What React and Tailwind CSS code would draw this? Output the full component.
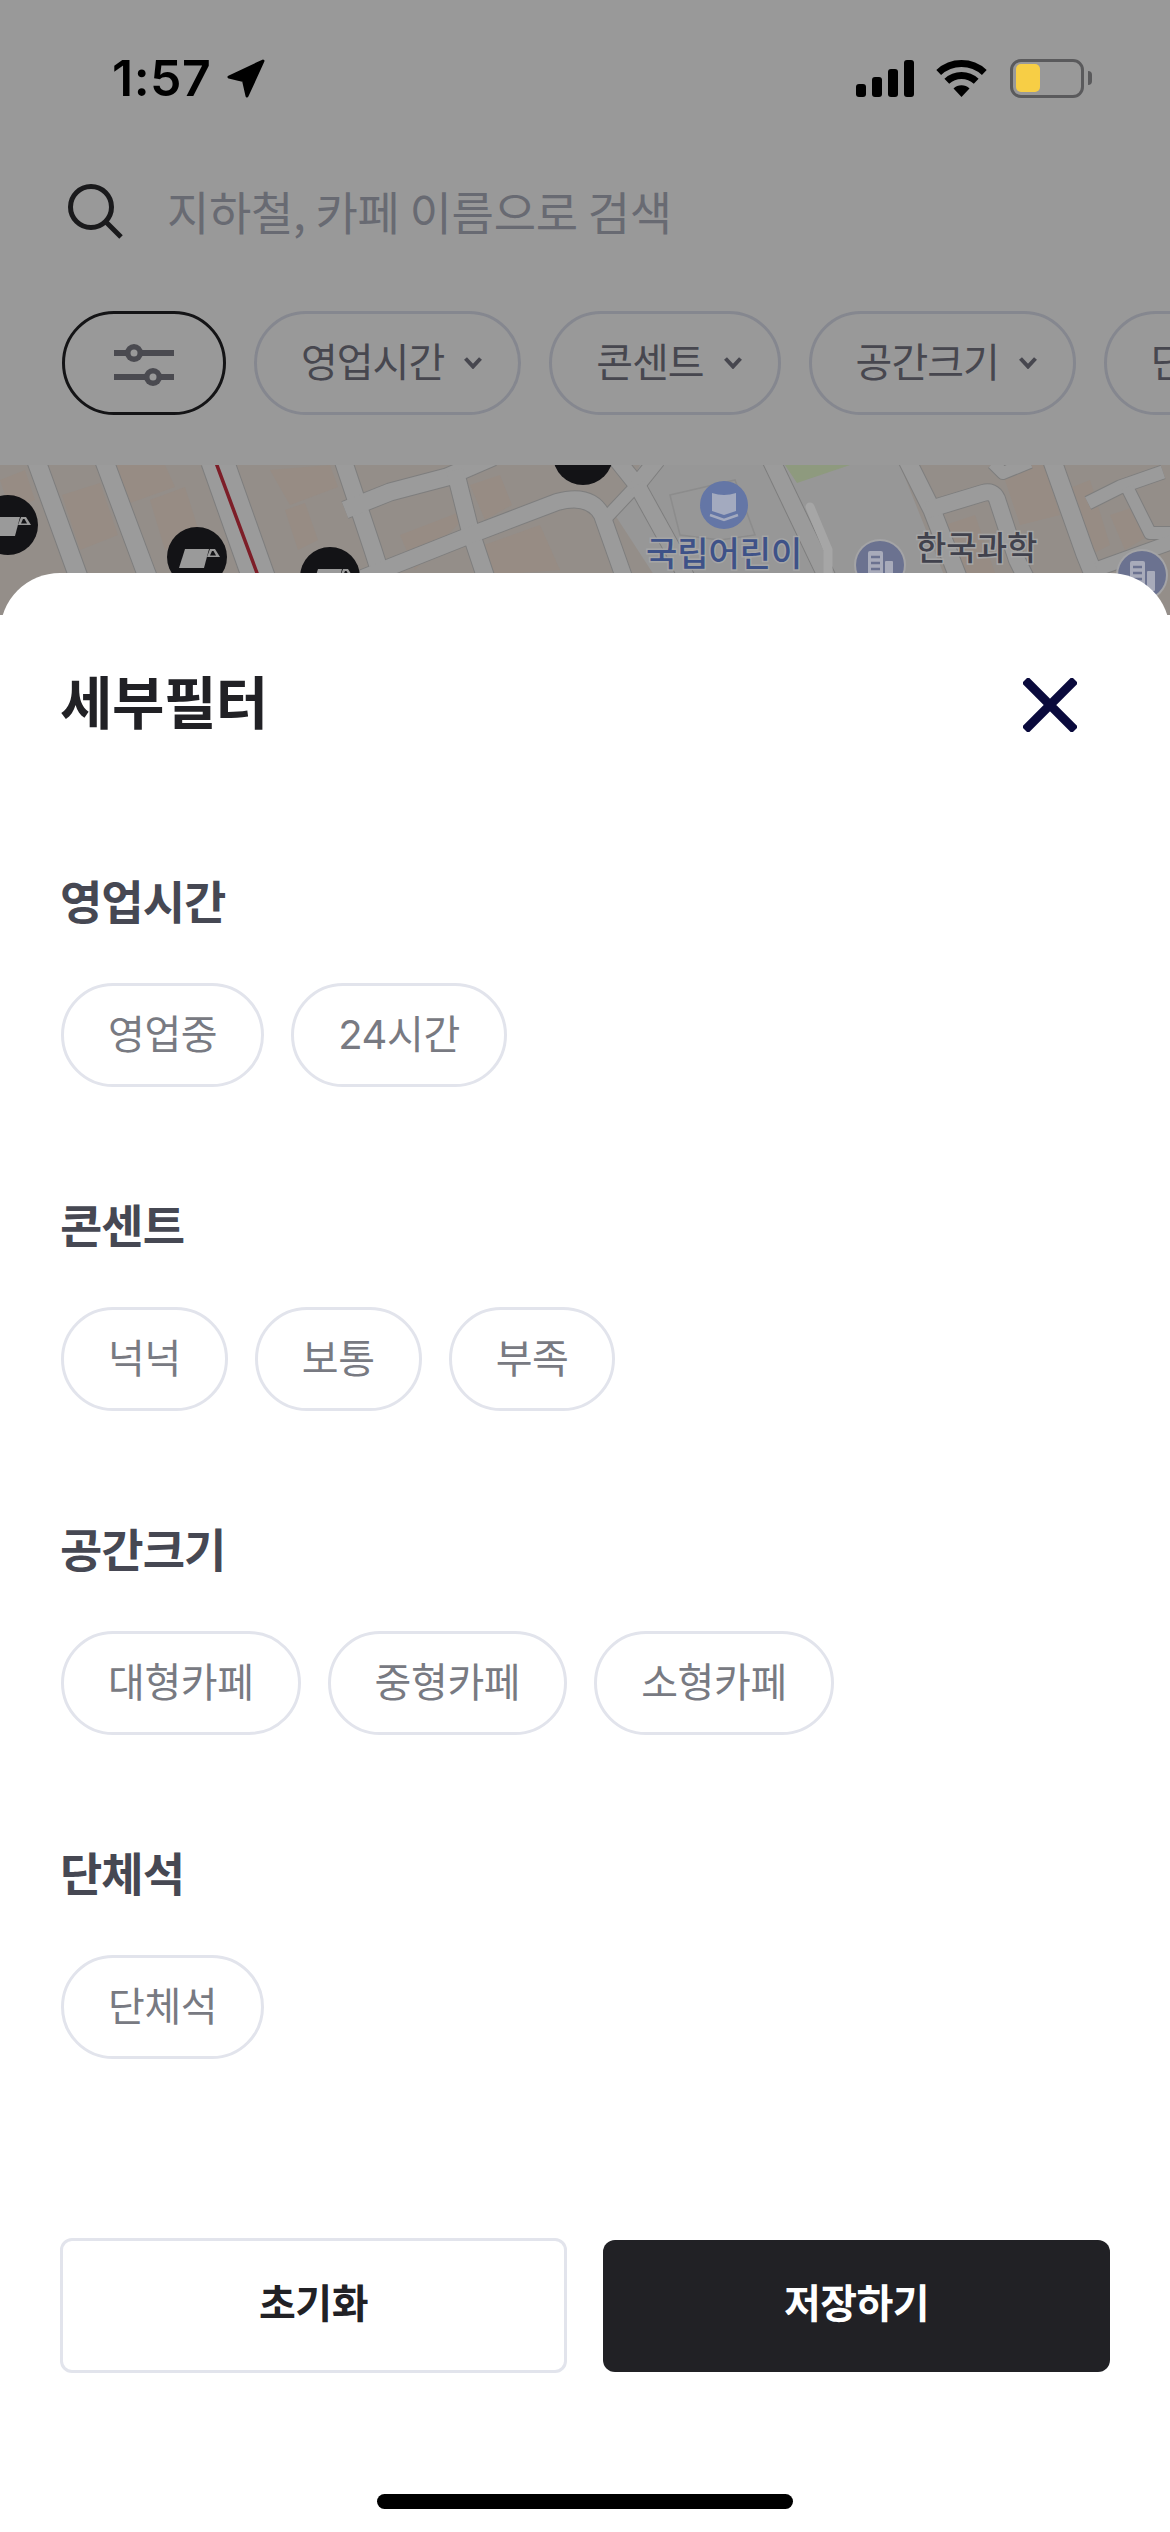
const FONT = "font-['Inter','Noto_Sans_CJK_KR','Noto_Sans',sans-serif]"

const TOP_CHIPS = ['영업시간', '콘센트', '공간크기', '단체석']

const SECTIONS = [
  { title: '영업시간', options: ['영업중', '24시간'] },
  { title: '콘센트', options: ['넉넉', '보통', '부족'] },
  { title: '공간크기', options: ['대형카페', '중형카페', '소형카페'] },
  { title: '단체석', options: ['단체석'] },
]

const ROADS = [
  { d: 'M36 -5L77 108L100 170', w: 18 },
  { d: 'M104 -5L145 105L170 170', w: 18 },
  { d: 'M217 -5L257 108L280 170', w: 32 },
  { d: 'M343 -5L373 85L400 170', w: 17 },
  { d: 'M345 45L390 27L447 12L493 -8', w: 17 },
  { d: 'M455 5L470 65L490 125', w: 17 },
  { d: 'M320 130L390 102L468 71L557 37Q590 28 602 50L625 115', w: 16 },
  { d: 'M617 -5L637 20L657 -5', w: 16 },
  { d: 'M637 20L607 52', w: 12 },
  { d: 'M637 20L673 85L695 130', w: 16 },
  { d: 'M771 -5L825 108L840 140', w: 17 },
  { d: 'M907 -5L932 45L965 130', w: 17 },
  { d: 'M927 45L983 28Q993 25 997 34L1017 95L1027 115', w: 16 },
  { d: 'M1052 -5L1085 88L1100 125', w: 18 },
  { d: 'M1088 38L1120 22L1163 7', w: 13 },
  { d: 'M1127 22L1150 68L1175 68', w: 12 },
  { d: 'M1097 104L1175 76', w: 14 },
  { d: 'M993 -2L1003 8L1030 -3', w: 12 },
]

const BUILDINGS = [
  'M0 15L25 5L35 35L10 45Z',
  'M62 30L100 18L118 70L80 85Z',
  'M115 0L165 0L175 22L130 38Z',
  'M150 35L185 22L200 70L165 85Z',
  'M270 5L330 0L338 22L290 40Z',
  'M285 45L305 38L318 75L298 85Z',
  'M400 70L465 45L462 55L415 105Z',
  'M470 85L540 60L560 105L490 110Z',
  'M470 20L500 10L512 40L485 55Z',
  'M945 60L975 50L995 108L960 108Z',
  'M1000 0L1045 0L1060 50L1020 60Z',
  'M1065 25L1090 15L1110 80L1090 90Z',
  'M1110 50L1140 40L1150 70L1125 85Z',
]

function Marker({ x, y }) {
  return (
    <g transform={`translate(${x} ${y})`}>
      <circle r="30" fill="#131316" />
      <path d="M-12 -8H12L7 11H-18Z" fill="#9a9a9a" />
      <path d="M13 -8H18L23 0H10Z" fill="#9a9a9a" />
      <path d="M15 -6H16.5L19 -1.5H13Z" fill="#131316" />
    </g>
  )
}

function OfficePin({ x, y }) {
  return (
    <g transform={`translate(${x} ${y})`}>
      <circle r="26" fill="#a4a4a6" />
      <circle r="24" fill="#6b7290" />
      <rect x="-12" y="-14" width="15" height="30" rx="2" fill="#a8abba" />
      <rect x="5" y="-4" width="8" height="20" rx="1" fill="#a8abba" />
      <path d="M-9 -8H0M-9 -2H0M-9 4H0" stroke="#6b7290" strokeWidth="2.5" />
    </g>
  )
}

// the dimmed map strip behind the sheet
function MapStrip() {
  return (
    <svg viewBox="0 0 1170 150" className="block h-[150px] w-[1170px]">
      <rect width="1170" height="150" fill="#948e89" />
      <path d="M640 0H900L960 150H680L615 50Z" fill="#979797" />
      <path d="M785 0H850L797 18Z" fill="#8e9a7e" />
      {BUILDINGS.map((d) => (
        <path key={d} d={d} fill="#978c84" />
      ))}
      <path d="M670 30L735 15L755 70L720 75L680 70Z" fill="none" stroke="#8c8c8c" strokeWidth="1.5" />
      {ROADS.map((r) => (
        <path key={r.d} d={r.d} fill="none" stroke="#7e7e7e" strokeWidth={r.w + 2} strokeLinejoin="round" />
      ))}
      {ROADS.map((r) => (
        <path key={r.d + 'f'} d={r.d} fill="none" stroke="#9b9b9b" strokeWidth={r.w} strokeLinejoin="round" />
      ))}
      <path d="M810 42L828 85V125" fill="none" stroke="#a6a6a6" strokeWidth="9" strokeLinecap="round" />
      <path d="M215 -5L257 108L280 170" fill="none" stroke="#7d1e28" strokeWidth="3.5" />
      <Marker x={8} y={60} />
      <Marker x={197} y={92} />
      <Marker x={330} y={112} />
      <circle cx="583" cy="-10" r="30" fill="#131316" />
      <circle cx="724" cy="40" r="24" fill="#6476a6" />
      <path d="M712 28Q724 32 736 28V46L724 50L712 46Z" fill="#a3aabf" />
      <path d="M710 50L724 55L738 50" fill="none" stroke="#a3aabf" strokeWidth="2.5" />
      <OfficePin x={880} y={100} />
      <OfficePin x={1142} y={110} />
      <text x="646" y="101" fontSize="34" fill="#3e5288" stroke="#a5a5a5" strokeWidth="3" paintOrder="stroke" fontFamily="'Noto Sans CJK KR',sans-serif" fontWeight="500" letterSpacing="0">국립어린이</text>
      <text x="916" y="95" fontSize="33" fill="#41424d" stroke="#a5a5a5" strokeWidth="3" paintOrder="stroke" fontFamily="'Noto Sans CJK KR',sans-serif" fontWeight="500">한국과학</text>
    </svg>
  )
}

function StatusBar() {
  return (
    <div className="flex h-[40px] items-center justify-between pl-[112px] pr-[86px]">
      <div className="flex items-center gap-[16px]">
        <span className="text-[50px] font-semibold leading-[40px] tracking-[0.5px] text-black">1:57</span>
        <svg width="38" height="39" viewBox="0 0 38 39" fill="#000" stroke="#000" strokeWidth="3" strokeLinejoin="round">
          <path d="M36 2L2 18L16.5 21.5L20 37Z" />
        </svg>
      </div>
      <div className="flex items-center">
        <svg width="58" height="37" viewBox="0 0 58 37" fill="#000">
          <rect x="0" y="24" width="10" height="13" rx="3" />
          <rect x="16" y="17" width="10" height="20" rx="3" />
          <rect x="32" y="9" width="10" height="28" rx="3" />
          <rect x="48" y="0" width="10" height="37" rx="3" />
        </svg>
        <svg width="51" height="37" viewBox="0 0 51 37" className="ml-[22px]" fill="none" stroke="#000" strokeWidth="7">
          <path d="M2.7 12.5A33.5 33.5 0 0 1 48.3 12.5" />
          <path d="M10.8 21.3A21.5 21.5 0 0 1 40.2 21.3" />
          <path d="M25.5 37L17.5 28.5A11.5 11.5 0 0 1 33.5 28.5Z" fill="#000" stroke="none" />
        </svg>
        <div className="relative ml-[23px] h-[39px] w-[74px] rounded-[11px] border-[3.5px] border-[#5a5a5c] p-[2.5px]">
          <div className="h-full w-[24px] rounded-[5px] bg-[#f7ce45]" />
          <div className="absolute right-[-11px] top-[9px] h-[14px] w-[4px] rounded-r-[4px] bg-[#5a5a5c]" />
        </div>
      </div>
    </div>
  )
}

function SearchRow() {
  return (
    <div className="mt-[86px] flex h-[55px] items-center pl-[68px]">
      <svg width="55" height="55" viewBox="0 0 55 55" fill="none" stroke="#1a1a1c" strokeWidth="5">
        <circle cx="23" cy="23" r="20.5" />
        <path d="M38 38L53 53" />
      </svg>
      <span className="ml-[44px] pb-[2px] font-['Noto_Sans_CJK_KR',sans-serif] text-[46px] leading-[53px] tracking-[-0.3px] text-[#686a72]">지하철, 카페 이름으로 검색</span>
    </div>
  )
}

function TopChips() {
  return (
    <div className="mt-[72px] flex gap-[28px] overflow-hidden pl-[62px]">
      <div className="flex h-[104px] w-[164px] shrink-0 items-center justify-center rounded-full border-[3px] border-[#141416]">
        <svg width="60" height="46" viewBox="0 0 60 46" fill="#4a4a50">
          <rect y="10" width="60" height="6" />
          <rect y="34" width="60" height="6" />
          <circle cx="20" cy="13" r="9" />
          <circle cx="20" cy="13" r="3.5" fill="#999" />
          <circle cx="39" cy="37" r="9" />
          <circle cx="39" cy="37" r="3.5" fill="#999" />
        </svg>
      </div>
      {TOP_CHIPS.map((label) => (
        <div key={label} className="flex h-[104px] shrink-0 items-center gap-[20px] rounded-full border-[3px] border-[#85878f] pl-[44px] pr-[36px]">
          <span className="text-[40px] leading-[48px] tracking-[-1px] text-[#47474f]">{label}</span>
          <svg width="18" height="12" viewBox="0 0 18 12" fill="none" stroke="#47474f" strokeWidth="4">
            <path d="M1.5 1.5L9 9.5L16.5 1.5" />
          </svg>
        </div>
      ))}
    </div>
  )
}

function FilterSection({ title, options }) {
  return (
    <section>
      <h3 className="text-[46px] font-bold leading-[56px] tracking-[-1px] text-[#464853]">{title}</h3>
      <div className="ml-px mt-[53px] flex gap-[27px]">
        {options.map((o) => (
          <div key={o} className="flex h-[104px] items-center rounded-full border-[3px] border-[#e2e4ec] px-[44px] text-[40px] leading-[48px] tracking-[-0.4px] text-[#787a82]">
            {o}
          </div>
        ))}
      </div>
    </section>
  )
}

export default function App() {
  return (
    <div className={`h-[2532px] w-[1170px] overflow-hidden bg-white ${FONT}`}>
      <header className="h-[465px] bg-[#999999] pt-[58px]">
        <StatusBar />
        <SearchRow />
        <TopChips />
      </header>
      <MapStrip />
      <div className="relative -mt-[42px] h-[1959px] rounded-t-[60px] bg-white px-[60px] pt-[102px]">
        <div className="flex h-[60px] items-center justify-between pr-[33px]">
          <h2 className="pb-[2px] text-[57px] font-bold leading-[58px] tracking-[-0.5px] text-[#212125]">세부필터</h2>
          <svg width="54" height="54" viewBox="0 0 54 54" fill="none" stroke="#0a0a3c" strokeWidth="9">
            <path d="M2 2L52 52M52 2L2 52" />
          </svg>
        </div>
        <div className="mt-[139px] flex flex-col gap-[111px]">
          {SECTIONS.map((s) => (
            <FilterSection key={s.title} {...s} />
          ))}
        </div>
        <div className="mt-[179px] flex items-center gap-[36px]">
          <button type="button" className="h-[135px] w-[507px] rounded-[12px] border-[3px] border-[#e2e4ec] bg-white pb-[4px] text-[40px] font-bold tracking-[-0.5px] text-[#212125]">초기화</button>
          <button type="button" className="h-[132px] w-[507px] rounded-[12px] bg-[#212125] pb-[4px] text-[40px] font-bold tracking-[-0.5px] text-white">저장하기</button>
        </div>
        <div className="mx-auto mt-[121px] h-[15px] w-[416px] rounded-full bg-black" />
      </div>
    </div>
  )
}
